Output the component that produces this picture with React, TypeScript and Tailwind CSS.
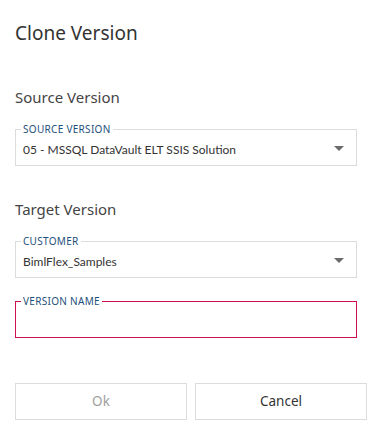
import React from "react";

function Caret() {
  return (
    <svg width="10" height="5" viewBox="0 0 10 5" className="shrink-0">
      <path d="M0 0 H10 L5 5 Z" fill="#6b6b6b" />
    </svg>
  );
}

function Field({
  label,
  value,
  select,
  error,
}: {
  label: string;
  value?: string;
  select?: boolean;
  error?: boolean;
}) {
  return (
    <div
      className={
        "relative h-[37px] border flex items-center pl-[7px] pr-[12px] " +
        (error ? "border-[#d0104c]" : "border-[#dcdcdc]")
      }
    >
      <span className="absolute left-[5px] top-[-7px] bg-white px-[2px] text-[10px] leading-[13px] tracking-[0.3px] text-[#1e4f7a]">
        {label}
      </span>
      <span
        className="flex-1 pt-[4px] text-[12px] leading-[16px] text-[#333]"
        style={{ fontFamily: 'Lato, "Noto Sans", sans-serif' }}
      >
        {value}
      </span>
      {select && (
        <div className="pt-[2px]">
          <Caret />
        </div>
      )}
    </div>
  );
}

export default function App() {
  return (
    <div
      className="w-[378px] h-[447px] bg-white pl-[15px] pr-[11px] overflow-hidden"
      style={{ fontFamily: '"Noto Sans", "Open Sans", sans-serif' }}
    >
      <div className="pt-[20px] text-[19px] leading-[26px] text-[#333]">Clone Version</div>
      <div className="pt-[40px] text-[15px] leading-[22px] text-[#444]">Source Version</div>
      <div className="mt-[21px] pr-[10px]">
        <Field label="SOURCE VERSION" value="05 - MSSQL DataVault ELT SSIS Solution" select />
      </div>
      <div className="pt-[32px] text-[15px] leading-[22px] text-[#444]">Target Version</div>
      <div className="mt-[21px] pr-[10px] flex flex-col gap-[23px]">
        <Field label="CUSTOMER" value="BimlFlex_Samples" select />
        <Field label="VERSION NAME" error />
      </div>
      <div className="mt-[45px] flex gap-[8px]">
        <button className="flex-1 h-[37px] border border-[#dcdcdc] bg-white text-[13.5px] text-[#a0a0a0]">
          Ok
        </button>
        <button className="flex-1 h-[37px] border border-[#dcdcdc] bg-white text-[13.5px] text-[#333]">
          Cancel
        </button>
      </div>
    </div>
  );
}
